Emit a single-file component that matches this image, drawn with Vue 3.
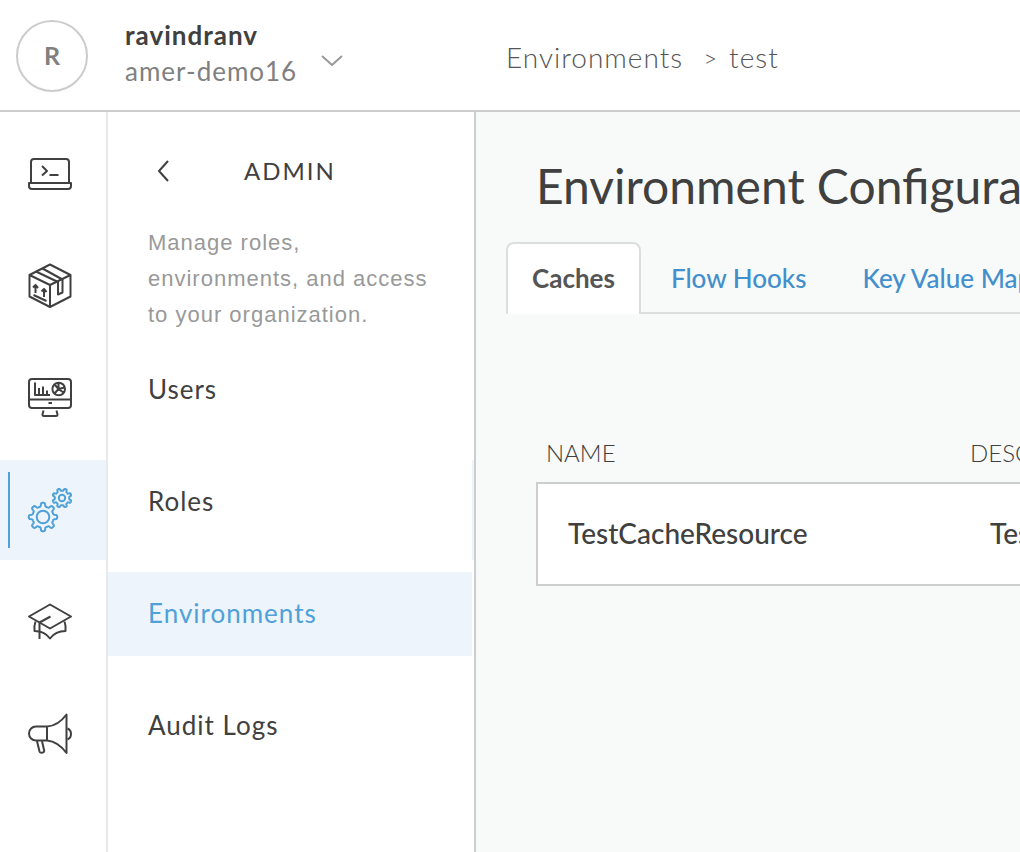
<script setup>
import { ref } from 'vue'

const gear = (cx, cy, outer, root, teeth, phase) => {
  const mean = (outer + root) / 2
  const depth = (outer - root) / 2
  const samples = teeth * 16
  const points = []
  for (let i = 0; i < samples; i++) {
    const angle = (Math.PI * 2 * i) / samples
    const radius = mean + depth * Math.tanh(3 * (Math.cos(teeth * (angle - phase)) - 0.15))
    points.push(`${(cx + radius * Math.cos(angle)).toFixed(2)} ${(cy + radius * Math.sin(angle)).toFixed(2)}`)
  }
  return `M${points.join('L')}Z`
}

const rail = [
  {
    label: 'Develop',
    paths: ['M5 33V12a3 3 0 0 1 3-3h32a3 3 0 0 1 3 3v21', 'M3 33h42v3a3 3 0 0 1-3 3H6a3 3 0 0 1-3-3z', 'M16 16l5 5-5 4.500M23.500 25h9']
  },
  {
    label: 'Publish',
    paths: [
      'M24 2.500L44.500 13v21.500L24 45 3.500 34.500V13zM3.500 13L24 23 44.500 13M24 23v22',
      'M10 9.500L32 20v12.500l4.500-2V17.500L16.500 6.500',
      'M9.500 31v-8M7 25.500l2.500-2.500 2.500 3M18 35v-8M15.500 29.500l2.500-2.500 2.500 3M7.500 33l13 6'
    ]
  },
  {
    label: 'Analyze',
    paths: [
      'M6 5h36a3 3 0 0 1 3 3v23a3 3 0 0 1-3 3H6a3 3 0 0 1-3-3V8a3 3 0 0 1 3-3zM3 25.500h42M22.500 29h3.500',
      'M17.500 36.500l-1 4q0 1.500 1.500 1.500h12q1.500 0 1.500-1.500l-1-4',
      'M9 8.500V21h15M13 14v6M17 12.500v8M21 16.500v4',
      'M39 15a6.300 6.300 0 1 1-12.600 0a6.300 6.300 0 1 1 12.600 0zM32.500 9v6l6-1.500M32.500 15l-4 4.500M32.500 15l5 3.500M32.500 15l-3.500-4'
    ]
  },
  {
    label: 'Admin',
    active: true,
    paths: [
      gear(17, 31, 14.2, 10.6, 8, 0),
      'M23.300 31a6.300 6.300 0 1 1-12.600 0a6.300 6.300 0 1 1 12.600 0z',
      gear(36, 12, 9.6, 7.2, 8, Math.PI / 8),
      'M39.200 12a3.200 3.200 0 1 1-6.400 0a3.200 3.200 0 1 1 6.400 0z'
    ]
  },
  {
    label: 'Learn',
    paths: ['M24 6.500L45 18.500 24 30.500 3 18.500z', 'M24.500 18.500l-11 6V41', 'M9.500 23.500q-1.500 4-1 9.500 10 0 15.500 7.500 5.500-7.500 15.500-7.500 .500-5.500-1-9.500']
  },
  {
    label: 'Announcements',
    paths: [
      'M21 16.500H10a7 7 0 0 0 0 14h11zM21 16.500Q32 16 40.500 4.500V43Q32 31.500 21 30.500',
      'M41.500 18.500q3.500 1.500 3.500 5.500t-3.500 5.500',
      'M11 31l2.500 10.500q.500 1.500 2.500 1.300t2.200-2L16 31'
    ]
  }
]

const menu = ['Users', 'Roles', 'Environments', 'Audit Logs']
const tabs = ['Caches', 'Flow Hooks', 'Key Value Maps']
const currentMenu = ref('Environments')
const currentTab = ref('Caches')
</script>

<template>
  <div class="app">
    <header class="topbar">
      <button class="account" type="button">
        <span class="avatar">R</span>
        <span class="names">
          <strong>ravindranv</strong>
          <span class="org">amer-demo16</span>
        </span>
        <svg class="chevron" viewBox="0 0 22 12" aria-hidden="true"><path d="M1 1l10 9L21 1" /></svg>
      </button>
      <nav class="crumbs" aria-label="Breadcrumb">
        <a href="#environments">Environments</a>
        <span class="sep">&gt;</span>
        <span>test</span>
      </nav>
    </header>

    <div class="body">
      <nav class="rail" aria-label="Main">
        <a
          v-for="item in rail"
          :key="item.label"
          href="#section"
          class="rail-item"
          :class="{ active: item.active }"
          :aria-label="item.label"
        >
          <svg viewBox="0 0 48 48" aria-hidden="true">
            <path v-for="(d, i) in item.paths" :key="i" :d="d" />
          </svg>
        </a>
      </nav>

      <aside class="panel">
        <div class="panel-head">
          <button class="back" type="button" aria-label="Back">
            <svg viewBox="0 0 12 22" aria-hidden="true"><path d="M11 1L2 11l9 10" /></svg>
          </button>
          <h2>ADMIN</h2>
        </div>
        <p class="intro">Manage roles, environments, and access to your organization.</p>
        <nav class="menu" aria-label="Admin">
          <a
            v-for="entry in menu"
            :key="entry"
            href="#admin"
            :class="{ active: entry === currentMenu }"
            @click.prevent="currentMenu = entry"
          >{{ entry }}</a>
        </nav>
      </aside>

      <main class="content">
        <h1>Environment Configuration</h1>
        <div class="tabs" role="tablist">
          <button
            v-for="tab in tabs"
            :key="tab"
            type="button"
            role="tab"
            class="tab"
            :class="{ active: tab === currentTab }"
            :aria-selected="tab === currentTab"
            @click="currentTab = tab"
          >{{ tab }}</button>
        </div>
        <table class="caches">
          <thead>
            <tr>
              <th class="name" scope="col">NAME</th>
              <th scope="col">DESCRIPTION</th>
            </tr>
          </thead>
          <tbody>
            <tr>
              <td class="name">TestCacheResource</td>
              <td>Test Cache Resource</td>
            </tr>
          </tbody>
        </table>
      </main>
    </div>
  </div>
</template>

<style>
body {
  background: #fff;
}
</style>

<style scoped>
.app {
  display: flex;
  flex-direction: column;
  min-height: 100vh;
  overflow: hidden;
  color: #404040;
  font-family: Lato, "Liberation Sans", sans-serif;
  font-size: 26px;
}
.app *,
.app *::before {
  box-sizing: border-box;
}
button {
  padding: 0;
  border: 0;
  background: none;
  color: inherit;
  font: inherit;
  cursor: pointer;
}
a {
  color: inherit;
  text-decoration: none;
}
svg {
  flex: none;
  fill: none;
  stroke: currentColor;
  stroke-width: 2;
  stroke-linejoin: round;
}
.topbar {
  display: grid;
  grid-template-columns: 476px 1fr;
  align-items: center;
  height: 112px;
  border-bottom: 2px solid #cbcdce;
}
.account {
  display: flex;
  align-items: center;
  padding: 2px 0 0 16px;
  text-align: left;
}
.avatar {
  display: flex;
  align-items: center;
  justify-content: center;
  width: 72px;
  height: 72px;
  padding-bottom: 2px;
  border: 2px solid #ccc;
  border-radius: 50%;
  color: #808080;
  font-size: 25px;
  font-weight: 700;
}
.names {
  display: flex;
  flex-direction: column;
  padding-bottom: 6px;
  margin-left: 37px;
  letter-spacing: 1px;
  line-height: 36px;
}
.org {
  color: #808080;
}
.chevron {
  width: 22px;
  height: 12px;
  margin: 10px 0 0 24px;
  color: #999;
}
.crumbs {
  display: flex;
  align-items: center;
  padding: 4px 0 0 30px;
  color: #555;
  font-size: 28px;
  font-weight: 300;
  letter-spacing: 1px;
}
.sep {
  margin: 0 11px 0 20px;
  font-size: 24px;
}
.body {
  display: grid;
  flex: 1;
  grid-template-columns: 108px 368px minmax(0, 1fr);
}
.rail {
  position: relative;
  display: flex;
  flex-direction: column;
  gap: 12px;
  padding: 12px 0;
  border-right: 2px solid #e8e9ea;
}
.rail-item {
  position: relative;
  display: flex;
  align-items: center;
  height: 100px;
}
.rail-item::before {
  width: 2px;
  height: 76px;
  margin: 0 16px 0 8px;
  content: "";
}
.rail-item svg {
  width: 48px;
  height: 48px;
}
.rail-item.active {
  background: #edf4fb;
  color: #4fa1d8;
}
.rail-item.active::before {
  background: #4fa1d8;
}
.rail-item.active::after {
  position: absolute;
  top: 0;
  left: 472px;
  width: 2px;
  height: 100%;
  background: #edf4fb;
  content: "";
}
.panel {
  padding: 41px 2px 0 0;
  border-right: 2px solid #cbcdce;
  letter-spacing: 1px;
}
.panel-head {
  display: flex;
  align-items: center;
  height: 36px;
  padding-left: 49px;
}
.back {
  display: flex;
}
.back svg {
  width: 12px;
  height: 22px;
}
.panel-head h2 {
  margin: 0 0 0 75px;
  font-size: 24px;
  font-weight: 400;
  letter-spacing: 2px;
  line-height: 36px;
}
.intro {
  margin: 36px 40px 0;
  color: #999;
  font-family: "Liberation Sans", Arial, sans-serif;
  font-size: 22px;
  line-height: 36px;
}
.menu {
  display: flex;
  flex-direction: column;
  gap: 28px;
  padding-top: 15px;
}
.menu a {
  height: 84px;
  padding-left: 40px;
  line-height: 82px;
}
.menu a.active {
  background: #edf4fb;
  color: #4fa1d8;
}
.content {
  padding: 44px 0 0 30px;
  overflow: hidden;
  background: #f8faf9;
  white-space: nowrap;
}
h1 {
  margin: 0 0 26px 30px;
  font-size: 48px;
  font-weight: 400;
  line-height: 60px;
}
.tabs {
  display: flex;
  gap: 4px;
  border-bottom: 2px solid #dcdedd;
}
.tab {
  height: 72px;
  margin-bottom: -2px;
  padding: 0 24px 2px;
  border: 2px solid transparent;
  border-bottom: 0;
  border-radius: 8px 8px 0 0;
  color: #428fcc;
  font-weight: 500;
}
.tab.active {
  border-color: #dcdedd;
  background: #fff;
  color: #555;
  font-weight: 700;
}
.caches {
  width: calc(100% + 400px);
  margin: 110px 0 0 30px;
  border-spacing: 0;
  table-layout: fixed;
  text-align: left;
}
.caches th {
  height: 58px;
  padding: 0 10px 2px;
  font-size: 24px;
  font-weight: 300;
}
.caches .name {
  width: 424px;
}
.caches td {
  height: 104px;
  padding: 0 30px 2px;
  border: solid #cbcdce;
  border-width: 2px 0;
  background: #fff;
  font-size: 28px;
  font-weight: 500;
}
.caches td.name {
  border-left-width: 2px;
}
</style>
